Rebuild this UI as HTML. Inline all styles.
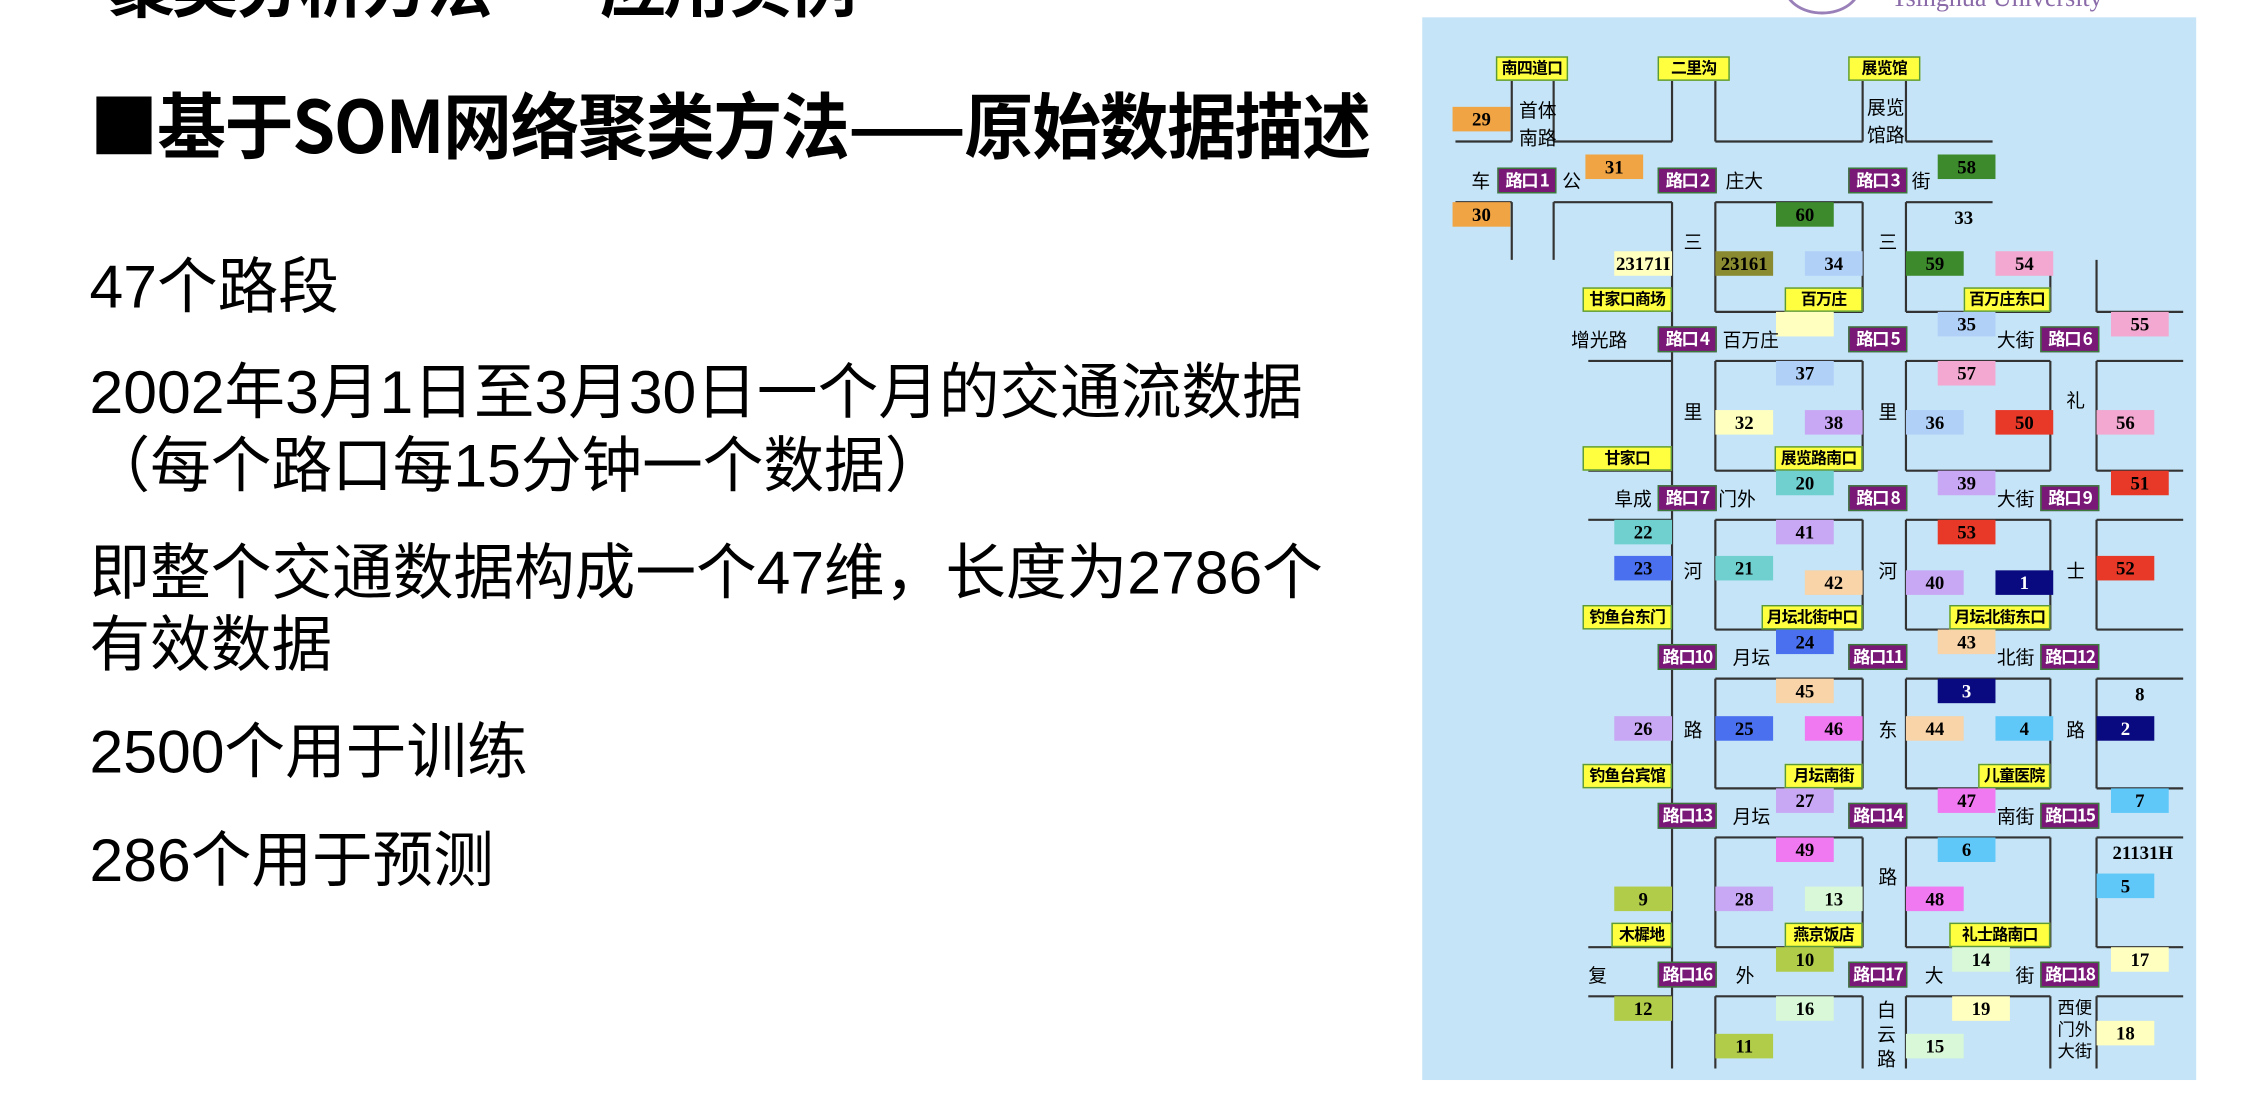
<!DOCTYPE html>
<html><head><meta charset="utf-8">
<style>
html,body{margin:0;padding:0;background:#fff;overflow:hidden;width:2264px;height:1100px}
#w{position:absolute;left:0;top:0;width:1568px;height:762px;transform:scale(1.4439);transform-origin:0 0;font-family:"Liberation Sans","Noto Sans CJK SC",sans-serif;color:#000}
.a{position:absolute;white-space:nowrap}
.t{font-size:42px;line-height:50px;left:62px}
#map{position:absolute;left:985px;top:12px;width:536px;height:736px;background:#c5e4f7}
.b{position:absolute;width:40px;height:17px;font:bold 13px/17px "Liberation Serif","Noto Serif CJK SC",serif;text-align:center;white-space:nowrap}
.y{position:absolute;height:15px;background:#ffff40;border:1px solid #5a9a3a;font:bold 11px/15px "Noto Sans CJK SC",sans-serif;text-align:center;white-space:nowrap;letter-spacing:-0.5px}
.p{position:absolute;width:39px;height:16px;background:#7a1878;border:1px solid #3a7a3a;color:#fff;font:bold 12px/16px "Noto Sans CJK SC",sans-serif;text-align:center;white-space:nowrap;letter-spacing:-1px;overflow:hidden}
.s{position:absolute;font:13px/15px "Noto Sans CJK SC",sans-serif;white-space:nowrap}
</style></head><body><div id="w">
<div class="a" style="left:75px;top:-36px;font:bold 46px/50px 'Noto Sans CJK SC',sans-serif;letter-spacing:-2px">聚类分析方法——应用实例</div>
<div class="a" style="left:1310px;top:-12px;font:18px/20px 'Liberation Serif',serif;color:#8a6aa8">Tsinghua University</div>
<div class="a" style="left:1235px;top:-30px;width:50px;height:36px;border:2px solid #9a80b8;border-radius:50%"></div>
<div class="a" style="left:62px;top:57px;font:bold 50px/56px 'Noto Sans CJK SC',sans-serif;letter-spacing:-1px;transform:scaleX(0.955);transform-origin:0 0">■基于SOM网络聚类方法——原始数据描述</div>
<div class="a t" style="top:174px">47个路段</div>
<div class="a t" style="top:247px">2002年3月1日至3月30日一个月的交通流数据</div>
<div class="a t" style="top:298px;left:62px">（每个路口每15分钟一个数据）</div>
<div class="a t" style="top:372px">即整个交通数据构成一个47维，长度为2786个</div>
<div class="a t" style="top:422px">有效数据</div>
<div class="a t" style="top:496px">2500个用于训练</div>
<div class="a t" style="top:571px">286个用于预测</div>

<div id="map"></div>
<svg class="a" style="left:0;top:0" width="1568" height="762" stroke="#333" stroke-width="1.5" fill="none">
<path d="M1047 56V98M1047 140V180M1076 56V98M1076 140V180M1158 56V98M1158 140V740
M1188 56V98M1188 140V216M1188 250V326M1188 360V436M1188 470V546M1188 580V656M1188 690V740
M1290 56V98M1290 140V216M1290 250V326M1290 360V436M1290 470V546M1290 580V656M1290 690V740
M1320 56V98M1320 140V216M1320 250V326M1320 360V436M1320 470V546M1320 580V656M1320 690V740
M1420 180V216M1420 250V326M1420 360V436M1420 470V546M1420 580V656M1420 690V740
M1452 180V216M1452 250V326M1452 360V436M1452 470V546M1452 580V656M1452 690V740
M1008 98H1047M1076 98H1158M1188 98H1290M1320 98H1380
M1008 140H1047M1076 140H1158M1188 140H1290M1320 140H1380
M1188 216H1290M1320 216H1420M1452 216H1512
M1100 250H1158M1188 250H1290M1320 250H1420M1452 250H1512
M1100 326H1158M1188 326H1290M1320 326H1420M1452 326H1512
M1100 360H1158M1188 360H1290M1320 360H1420M1452 360H1512
M1188 436H1290M1320 436H1420M1452 436H1512
M1188 470H1290M1320 470H1420M1452 470H1512
M1188 546H1290M1320 546H1420M1452 546H1512
M1188 580H1290M1320 580H1420M1452 580H1512
M1100 656H1158M1188 656H1290M1320 656H1420M1452 656H1512
M1100 690H1158M1188 690H1290M1320 690H1420M1452 690H1512"/>
</svg>

<div class="y" style="left:1036px;top:39px;width:48px">南四道口</div>
<div class="y" style="left:1148px;top:39px;width:48px">二里沟</div>
<div class="y" style="left:1280px;top:39px;width:48px">展览馆</div>
<div class="y" style="left:1096px;top:199px;width:60px">甘家口商场</div>
<div class="y" style="left:1236px;top:199px;width:52px">百万庄</div>
<div class="y" style="left:1360px;top:199px;width:58px">百万庄东口</div>
<div class="y" style="left:1096px;top:309px;width:60px">甘家口</div>
<div class="y" style="left:1229px;top:309px;width:59px">展览路南口</div>
<div class="y" style="left:1096px;top:419px;width:60px">钓鱼台东门</div>
<div class="y" style="left:1220px;top:419px;width:68px">月坛北街中口</div>
<div class="y" style="left:1350px;top:419px;width:68px">月坛北街东口</div>
<div class="y" style="left:1096px;top:529px;width:60px">钓鱼台宾馆</div>
<div class="y" style="left:1236px;top:529px;width:52px">月坛南街</div>
<div class="y" style="left:1370px;top:529px;width:48px">儿童医院</div>
<div class="y" style="left:1116px;top:639px;width:40px">木樨地</div>
<div class="y" style="left:1236px;top:639px;width:52px">燕京饭店</div>
<div class="y" style="left:1350px;top:639px;width:68px">礼士路南口</div>

<div class="p" style="left:1037px;top:116px">路口 1</div>
<div class="p" style="left:1148px;top:116px">路口 2</div>
<div class="p" style="left:1280px;top:116px">路口 3</div>
<div class="p" style="left:1148px;top:226px">路口 4</div>
<div class="p" style="left:1280px;top:226px">路口 5</div>
<div class="p" style="left:1413px;top:226px">路口 6</div>
<div class="p" style="left:1148px;top:336px">路口 7</div>
<div class="p" style="left:1280px;top:336px">路口 8</div>
<div class="p" style="left:1413px;top:336px">路口 9</div>
<div class="p" style="left:1148px;top:446px">路口10</div>
<div class="p" style="left:1280px;top:446px">路口11</div>
<div class="p" style="left:1413px;top:446px">路口12</div>
<div class="p" style="left:1148px;top:556px">路口13</div>
<div class="p" style="left:1280px;top:556px">路口14</div>
<div class="p" style="left:1413px;top:556px">路口15</div>
<div class="p" style="left:1148px;top:666px">路口16</div>
<div class="p" style="left:1280px;top:666px">路口17</div>
<div class="p" style="left:1413px;top:666px">路口18</div>

<div class="b" style="left:1006px;top:74px;background:#f0a444">29</div>
<div class="b" style="left:1098px;top:107px;background:#f0a444">31</div>
<div class="b" style="left:1006px;top:140px;background:#f0a444">30</div>
<div class="b" style="left:1342px;top:107px;background:#3c8a2c">58</div>
<div class="b" style="left:1230px;top:140px;background:#3c8a2c">60</div>
<div class="b" style="left:1340px;top:142px">33</div>
<div class="b" style="left:1118px;top:174px;background:#ffffc0">23171I</div>
<div class="b" style="left:1188px;top:174px;background:#8a8a30">23161</div>
<div class="b" style="left:1250px;top:174px;background:#b0d0f8">34</div>
<div class="b" style="left:1320px;top:174px;background:#3c8a2c">59</div>
<div class="b" style="left:1382px;top:174px;background:#f2a8d0">54</div>
<div class="b" style="left:1230px;top:216px;background:#ffffc0"></div>
<div class="b" style="left:1342px;top:216px;background:#b0d0f8">35</div>
<div class="b" style="left:1462px;top:216px;background:#f2a8d0">55</div>
<div class="b" style="left:1230px;top:250px;background:#b0d0f8">37</div>
<div class="b" style="left:1342px;top:250px;background:#f2a8d0">57</div>
<div class="b" style="left:1188px;top:284px;background:#ffffc0">32</div>
<div class="b" style="left:1250px;top:284px;background:#c8a8f4">38</div>
<div class="b" style="left:1320px;top:284px;background:#b0d0f8">36</div>
<div class="b" style="left:1382px;top:284px;background:#e83828">50</div>
<div class="b" style="left:1452px;top:284px;background:#f2a8d0">56</div>
<div class="b" style="left:1230px;top:326px;background:#70d0d0">20</div>
<div class="b" style="left:1342px;top:326px;background:#c8a8f4">39</div>
<div class="b" style="left:1462px;top:326px;background:#e83828">51</div>
<div class="b" style="left:1118px;top:360px;background:#70d0d0">22</div>
<div class="b" style="left:1230px;top:360px;background:#c8a8f4">41</div>
<div class="b" style="left:1342px;top:360px;background:#e83828">53</div>
<div class="b" style="left:1118px;top:385px;background:#4a70f0">23</div>
<div class="b" style="left:1188px;top:385px;background:#70d0d0">21</div>
<div class="b" style="left:1250px;top:395px;background:#f8d4a8">42</div>
<div class="b" style="left:1320px;top:395px;background:#c8a8f4">40</div>
<div class="b" style="left:1382px;top:395px;background:#0a0a80;color:#fff">1</div>
<div class="b" style="left:1452px;top:385px;background:#e83828">52</div>
<div class="b" style="left:1230px;top:436px;background:#4a70f0">24</div>
<div class="b" style="left:1342px;top:436px;background:#f8d4a8">43</div>
<div class="b" style="left:1230px;top:470px;background:#f8d4a8">45</div>
<div class="b" style="left:1342px;top:470px;background:#0a0a80;color:#fff">3</div>
<div class="b" style="left:1462px;top:472px">8</div>
<div class="b" style="left:1118px;top:496px;background:#c8a8f4">26</div>
<div class="b" style="left:1188px;top:496px;background:#4a70f0">25</div>
<div class="b" style="left:1250px;top:496px;background:#f078f0">46</div>
<div class="b" style="left:1320px;top:496px;background:#f8d4a8">44</div>
<div class="b" style="left:1382px;top:496px;background:#60c8f8">4</div>
<div class="b" style="left:1452px;top:496px;background:#0a0a80;color:#fff">2</div>
<div class="b" style="left:1230px;top:546px;background:#c8a8f4">27</div>
<div class="b" style="left:1342px;top:546px;background:#f078f0">47</div>
<div class="b" style="left:1462px;top:546px;background:#60c8f8">7</div>
<div class="b" style="left:1230px;top:580px;background:#f078f0">49</div>
<div class="b" style="left:1342px;top:580px;background:#60c8f8">6</div>
<div class="b" style="left:1462px;top:582px;width:44px">21131H</div>
<div class="b" style="left:1452px;top:605px;background:#60c8f8">5</div>
<div class="b" style="left:1118px;top:614px;background:#b0cc48">9</div>
<div class="b" style="left:1188px;top:614px;background:#c8a8f4">28</div>
<div class="b" style="left:1250px;top:614px;background:#d8f8d8">13</div>
<div class="b" style="left:1320px;top:614px;background:#f078f0">48</div>
<div class="b" style="left:1230px;top:656px;background:#b0cc48">10</div>
<div class="b" style="left:1352px;top:656px;background:#d8f8d8">14</div>
<div class="b" style="left:1462px;top:656px;background:#ffffc0">17</div>
<div class="b" style="left:1118px;top:690px;background:#b0cc48">12</div>
<div class="b" style="left:1230px;top:690px;background:#d8f8d8">16</div>
<div class="b" style="left:1352px;top:690px;background:#ffffc0">19</div>
<div class="b" style="left:1452px;top:707px;background:#ffffc0">18</div>
<div class="b" style="left:1188px;top:716px;background:#b0cc48">11</div>
<div class="b" style="left:1320px;top:716px;background:#d8f8d8">15</div>

<div class="s" style="left:1052px;top:68px">首体</div>
<div class="s" style="left:1052px;top:87px">南路</div>
<div class="s" style="left:1293px;top:66px">展览</div>
<div class="s" style="left:1293px;top:85px">馆路</div>
<div class="s" style="left:1019px;top:117px">车</div>
<div class="s" style="left:1082px;top:117px">公</div>
<div class="s" style="left:1195px;top:117px">庄大</div>
<div class="s" style="left:1324px;top:117px">街</div>
<div class="s" style="left:1166px;top:159px">三</div>
<div class="s" style="left:1301px;top:159px">三</div>
<div class="s" style="left:1088px;top:227px">增光路</div>
<div class="s" style="left:1193px;top:227px">百万庄</div>
<div class="s" style="left:1383px;top:227px">大街</div>
<div class="s" style="left:1166px;top:277px">里</div>
<div class="s" style="left:1301px;top:277px">里</div>
<div class="s" style="left:1431px;top:269px">礼</div>
<div class="s" style="left:1118px;top:337px">阜成</div>
<div class="s" style="left:1190px;top:337px">门外</div>
<div class="s" style="left:1383px;top:337px">大街</div>
<div class="s" style="left:1166px;top:387px">河</div>
<div class="s" style="left:1301px;top:387px">河</div>
<div class="s" style="left:1431px;top:387px">士</div>
<div class="s" style="left:1200px;top:447px">月坛</div>
<div class="s" style="left:1383px;top:447px">北街</div>
<div class="s" style="left:1166px;top:497px">路</div>
<div class="s" style="left:1301px;top:497px">东</div>
<div class="s" style="left:1431px;top:497px">路</div>
<div class="s" style="left:1200px;top:557px">月坛</div>
<div class="s" style="left:1383px;top:557px">南街</div>
<div class="s" style="left:1301px;top:599px">路</div>
<div class="s" style="left:1100px;top:667px">复</div>
<div class="s" style="left:1202px;top:667px">外</div>
<div class="s" style="left:1333px;top:667px">大</div>
<div class="s" style="left:1396px;top:667px">街</div>
<div class="s" style="left:1300px;top:691px">白</div>
<div class="s" style="left:1300px;top:708px">云</div>
<div class="s" style="left:1300px;top:725px">路</div>
<div class="s" style="left:1425px;top:690px;font-size:12px;line-height:15px">西便<br>门外<br>大街</div>
</div></body></html>
